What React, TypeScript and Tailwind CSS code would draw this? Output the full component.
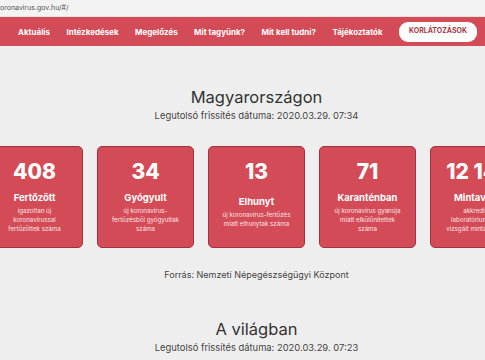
import React from "react";

const navItems = ["Aktuális", "Intézkedések", "Megelőzés", "Mit tagyünk?", "Mit kell tudni?", "Tájékoztatók"];

const cards = [
  { n: "408", label: "Fertőzött", desc: ["igazoltan új", "koronavírussal", "fertőzöttek száma"] },
  { n: "34", label: "Gyógyult", desc: ["új koronavírus-", "fertőzésből gyógyultak", "száma"] },
  { n: "13", label: "Elhunyt", desc: ["új koronavírus-fertőzés", "miatt elhunytak száma"] },
  { n: "71", label: "Karanténban", desc: ["új koronavírus gyanúja", "miatt elkülönítettek", "száma"] },
  { n: "12 145", label: "Mintavétel", desc: ["akkreditált", "laboratóriumokban", "vizsgált minták száma"] },
];

export default function App() {
  return (
    <div className="w-[485px] h-[360px] overflow-hidden bg-[#eeeeee] font-['Inter',sans-serif] text-[#333]">
      <div className="h-[17px] bg-[#f3f3f3] border-b border-[#e4e4e4] flex items-center text-[7px] text-[#555] whitespace-nowrap">
        oronavirus.gov.hu/#/
      </div>
      <div className="h-[29px] bg-[#d24b57] flex items-center pl-[18px] pr-[8px] justify-between">
        {navItems.map((t) => (
          <span key={t} className="text-white text-[8px] font-bold whitespace-nowrap">{t}</span>
        ))}
        <span className="bg-white rounded-[9px] h-[20px] w-[78px] flex items-center justify-center text-[#a63a4a] text-[7px] font-bold">
          KORLÁTOZÁSOK
        </span>
      </div>
      <div className="w-[513px]">
        <div className="flex flex-col items-center">
          <div className="mt-[41px] text-[16.5px] leading-[20px] text-[#333]">Magyarországon</div>
          <div className="mt-[3px] text-[9.4px] leading-[12px] text-[#444]">Legutolsó frissítés dátuma: 2020.03.29. 07:34</div>
        </div>
        <div className="mt-[24px] flex justify-center gap-[14px]">
          {cards.map((c) => (
            <div
              key={c.label}
              className="w-[97px] h-[102px] shrink-0 bg-[#d44b58] border-[1.5px] border-[#a3323e] rounded-[5px] flex flex-col items-center text-white"
            >
              <div className="mt-[13px] text-[21px] leading-[24px] font-extrabold whitespace-nowrap">{c.n}</div>
              <div className="flex-1 flex flex-col items-center justify-center pb-[7px]">
                <div className="text-[9.5px] leading-[12px] font-bold whitespace-nowrap">{c.label}</div>
                <div className="mt-[2px] flex flex-col items-center text-[6.2px] leading-[9px] text-[#fbe3e5]">
                  {c.desc.map((d) => (
                    <span key={d} className="whitespace-nowrap">{d}</span>
                  ))}
                </div>
              </div>
            </div>
          ))}
        </div>
        <div className="flex flex-col items-center">
          <div className="mt-[21px] text-[9px] leading-[12px] text-[#444]">Forrás: Nemzeti Népegészségügyi Központ</div>
          <div className="mt-[38px] text-[16.5px] leading-[20px] text-[#333]">A világban</div>
          <div className="mt-[3px] text-[9.4px] leading-[12px] text-[#444]">Legutolsó frissítés dátuma: 2020.03.29. 07:23</div>
        </div>
      </div>
    </div>
  );
}
